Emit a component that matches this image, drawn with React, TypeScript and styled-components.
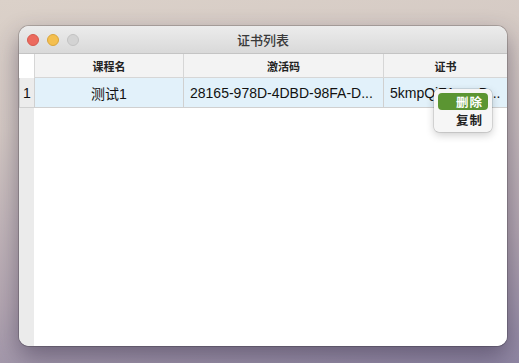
import React from "react";
import styled, { createGlobalStyle } from "styled-components";

const GlobalStyle = createGlobalStyle`
  html, body {
    margin: 0;
    padding: 0;
  }
  body {
    font-family: "Liberation Sans", "Noto Sans CJK SC", sans-serif;
  }
`;

const rows = [
  { id: 1, course: "测试1", code: "28165-978D-4DBD-98FA-D...", cert: "5kmpQiZ1xwzD..." },
];

const App = () => {
  return (
    <Desktop>
      <GlobalStyle />
      <Window>
        <TitleBar>
          <Lights>
            <Light color="#ec6a5e" border="#d45a4f" />
            <Light color="#f4bf4f" border="#d9a53c" />
            <Light color="#d3d3d3" border="#c2c2c2" />
          </Lights>
          <Title>证书列表</Title>
        </TitleBar>

        <Table>
          <Corner />
          <HeadCell>课程名</HeadCell>
          <HeadCell>激活码</HeadCell>
          <HeadCell>证书</HeadCell>

          {rows.map((r) => (
            <React.Fragment key={r.id}>
              <RowNum>{r.id}</RowNum>
              <Cell center>{r.course}</Cell>
              <Cell>{r.code}</Cell>
              <Cell>{r.cert}</Cell>
            </React.Fragment>
          ))}

          <Gutter />
          <Empty />
        </Table>

        <Menu>
          <MenuItem active>删除</MenuItem>
          <MenuItem>复制</MenuItem>
        </Menu>
      </Window>
    </Desktop>
  );
};

export default App;

const Desktop = styled.div`
  width: 519px;
  height: 363px;
  box-sizing: border-box;
  padding: 26px 12px 17px 19px;
  display: flex;
  background: linear-gradient(
    172deg,
    #dbd1c9 0%,
    #d3c8c3 30%,
    #b3a6b1 70%,
    #8f86a3 100%
  );
  overflow: hidden;
`;

const Window = styled.div`
  flex: 1;
  position: relative;
  display: flex;
  flex-direction: column;
  border-radius: 10px;
  overflow: hidden;
  background: #ffffff;
  box-shadow: 0 0 0 1px rgba(0, 0, 0, 0.18), 0 10px 24px rgba(40, 30, 60, 0.45);
`;

const TitleBar = styled.div`
  height: 27px;
  flex-shrink: 0;
  display: flex;
  align-items: center;
  position: relative;
  background: linear-gradient(#ececec, #d9d9d9);
  border-bottom: 1px solid #c4c4c4;
`;

const Lights = styled.div`
  display: flex;
  gap: 8px;
  padding-left: 8px;
`;

const Light = styled.div<{ color: string; border: string }>`
  width: 12px;
  height: 12px;
  border-radius: 50%;
  box-sizing: border-box;
  background: ${(p) => p.color};
  border: 0.5px solid ${(p) => p.border};
`;

const Title = styled.div`
  flex: 1;
  text-align: center;
  margin-right: 60px;
  font-size: 13px;
  font-weight: 500;
  color: #3a3a3a;
`;

const Table = styled.div`
  flex: 1;
  display: grid;
  grid-template-columns: 15px 149px 200px 1fr;
  grid-template-rows: 24px 30px 1fr;
`;

const Corner = styled.div`
  background: #ffffff;
`;

const HeadCell = styled.div`
  display: flex;
  align-items: center;
  justify-content: center;
  background: #f3f3f3;
  border-left: 1px solid #d6d6d6;
  border-bottom: 1px solid #d6d6d6;
  font-size: 11px;
  font-weight: 700;
  color: #222;
`;

const RowNum = styled.div`
  display: flex;
  align-items: center;
  justify-content: center;
  background: #ececec;
  border-left: 1px solid #d0d0d0;
  border-bottom: 1px solid #d0d0d0;
  font-size: 14px;
  color: #111;
`;

const Cell = styled.div<{ center?: boolean }>`
  display: flex;
  align-items: center;
  justify-content: ${(p) => (p.center ? "center" : "flex-start")};
  padding: 0 6px;
  background: #e2f1fa;
  border-left: 1px solid #d0d0d0;
  border-bottom: 1px solid #d0d0d0;
  font-size: 14px;
  color: #111;
  white-space: nowrap;
  overflow: hidden;
  min-width: 0;
`;

const Gutter = styled.div`
  background: #ebebeb;
`;

const Empty = styled.div`
  grid-column: 2 / 5;
  background: #ffffff;
`;

const Menu = styled.div`
  position: absolute;
  left: 415px;
  top: 63px;
  width: 58px;
  box-sizing: border-box;
  padding: 4px;
  display: flex;
  flex-direction: column;
  gap: 1px;
  background: #f6f6f6;
  border-radius: 5px;
  box-shadow: 0 0 0 0.5px rgba(0, 0, 0, 0.2), 0 3px 8px rgba(0, 0, 0, 0.2);
`;

const MenuItem = styled.div<{ active?: boolean }>`
  height: 17px;
  display: flex;
  align-items: center;
  padding-left: 18px;
  border-radius: 4px;
  font-size: 12.5px;
  font-weight: 700;
  letter-spacing: 1px;
  color: ${(p) => (p.active ? "#ffffff" : "#222")};
  background: ${(p) => (p.active ? "#5b9532" : "transparent")};
`;
